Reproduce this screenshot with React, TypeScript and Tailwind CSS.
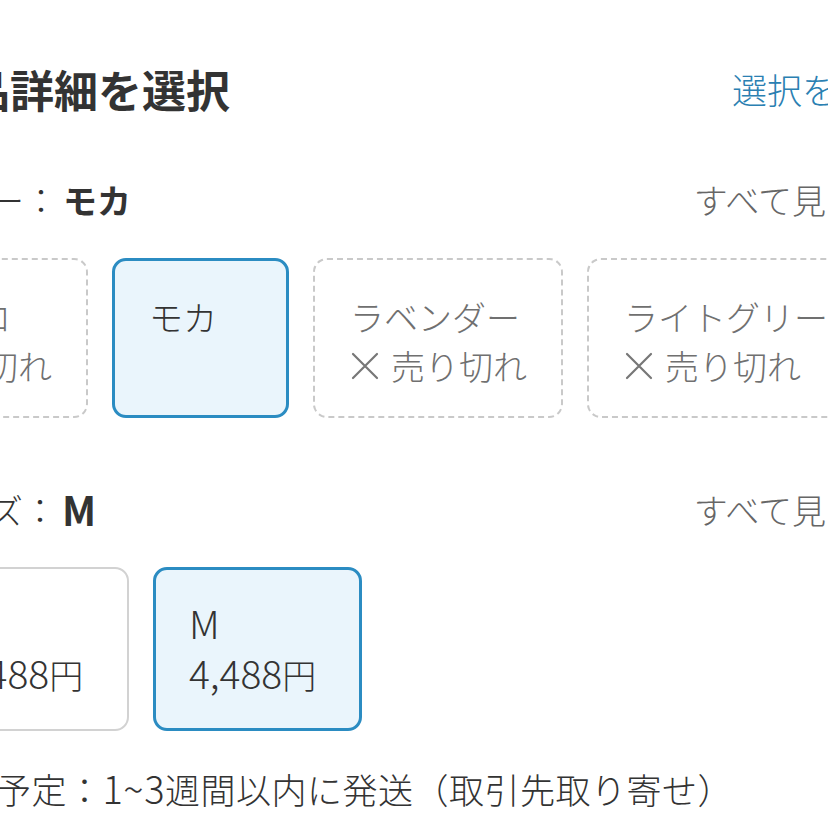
import React from 'react';

const FONT = { fontFamily: '"Noto Sans CJK JP", "Noto Sans", sans-serif' };

type ColorOpt = { name: string; soldOut?: boolean; selected?: boolean };

const colors: ColorOpt[] = [
  { name: 'オフシロ', soldOut: true },
  { name: 'モカ', selected: true },
  { name: 'ラベンダー', soldOut: true },
  { name: 'ライトグリーン', soldOut: true },
];

const sizes = [
  { name: 'S', price: '4,488', selected: false },
  { name: 'M', price: '4,488', selected: true },
];

const Cross = () => (
  <svg viewBox="0 0 30 30" className="w-[30px] h-[30px] mr-[11px] shrink-0">
    <path d="M3 3 L27 27 M27 3 L3 27" stroke="#777" strokeWidth="2.2" strokeLinecap="round" fill="none" />
  </svg>
);

const SectionHead = ({ label, children }: { label: string; children: React.ReactNode }) => (
  <div className="flex items-center justify-between pr-[102px] h-[48px] text-[34px] leading-[48px]">
    <div className="flex items-center text-[#333] font-light">
      {label}：<span className="ml-[5px] font-bold">{children}</span>
    </div>
    <span className="text-[#666] font-light">すべて見る</span>
  </div>
);

export default function App() {
  return (
    <div className="w-[828px] h-[828px] overflow-hidden bg-white" style={FONT}>
      <div className="-ml-[78px] w-[1040px] pt-[56px]">
        {/* title */}
        <div className="flex items-center justify-between pr-[20px]">
          <h2 className="text-[44px] leading-[66px] font-bold text-[#333]">商品詳細を選択</h2>
          <span className="text-[35px] font-light text-[#2a80b2]">選択をクリア</span>
        </div>

        {/* color */}
        <div className="mt-[54px]">
          <SectionHead label="カラー">モカ</SectionHead>
          <div className="flex gap-[24px] mt-[34px] -ml-[84px]">
            {colors.map((c) => (
              <div
                key={c.name}
                className={
                  c.selected
                    ? 'shrink-0 h-[160px] min-w-[177px] rounded-[14px] border-[3px] border-[#2b8cc2] bg-[#eaf5fc] pl-[34px] pr-[36px] pt-[31px] text-[34px] leading-[49px] font-light text-[#333]'
                    : 'shrink-0 h-[160px] rounded-[14px] border-2 border-dashed border-[#c9c9c9] pl-[35px] pr-[34px] pt-[32px] text-[34px] leading-[49px] font-light text-[#707070]'
                }
              >
                <div className="whitespace-nowrap">{c.name}</div>
                {c.soldOut && (
                  <div className="flex items-center whitespace-nowrap">
                    <Cross />
                    売り切れ
                  </div>
                )}
              </div>
            ))}
          </div>
        </div>

        {/* size */}
        <div className="mt-[68px]">
          <SectionHead label="サイズ">
            <span className="text-[40px] leading-[48px]">M</span>
          </SectionHead>
          <div className="flex gap-[24px] mt-[33px] -ml-[2px]">
            {sizes.map((s) => (
              <div
                key={s.name}
                className={
                  s.selected
                    ? 'shrink-0 w-[209px] h-[164px] rounded-[14px] border-[3px] border-[#2b8cc2] bg-[#eaf5fc] pl-[33px] pt-[27px] text-[34px] leading-[50px] font-light text-[#333]'
                    : 'shrink-0 w-[209px] h-[164px] rounded-[14px] border-2 border-[#d2d2d2] bg-white pl-[34px] pt-[28px] text-[34px] leading-[50px] font-light text-[#333]'
                }
              >
                <div className="text-[39px] leading-[50px]">{s.name}</div>
                <div className="leading-[50px]">
                  <span className="text-[39px] leading-[50px]">{s.price}</span>円
                </div>
              </div>
            ))}
          </div>
        </div>

        {/* shipping */}
        <p className="mt-[32px] pl-[3px] text-[35px] leading-[50px] tracking-[0.5px] font-light text-[#333] whitespace-nowrap">
          発送予定：<span className="text-[38px]">1~3</span>週間以内に発送（取引先取り寄せ）
        </p>
      </div>
    </div>
  );
}
